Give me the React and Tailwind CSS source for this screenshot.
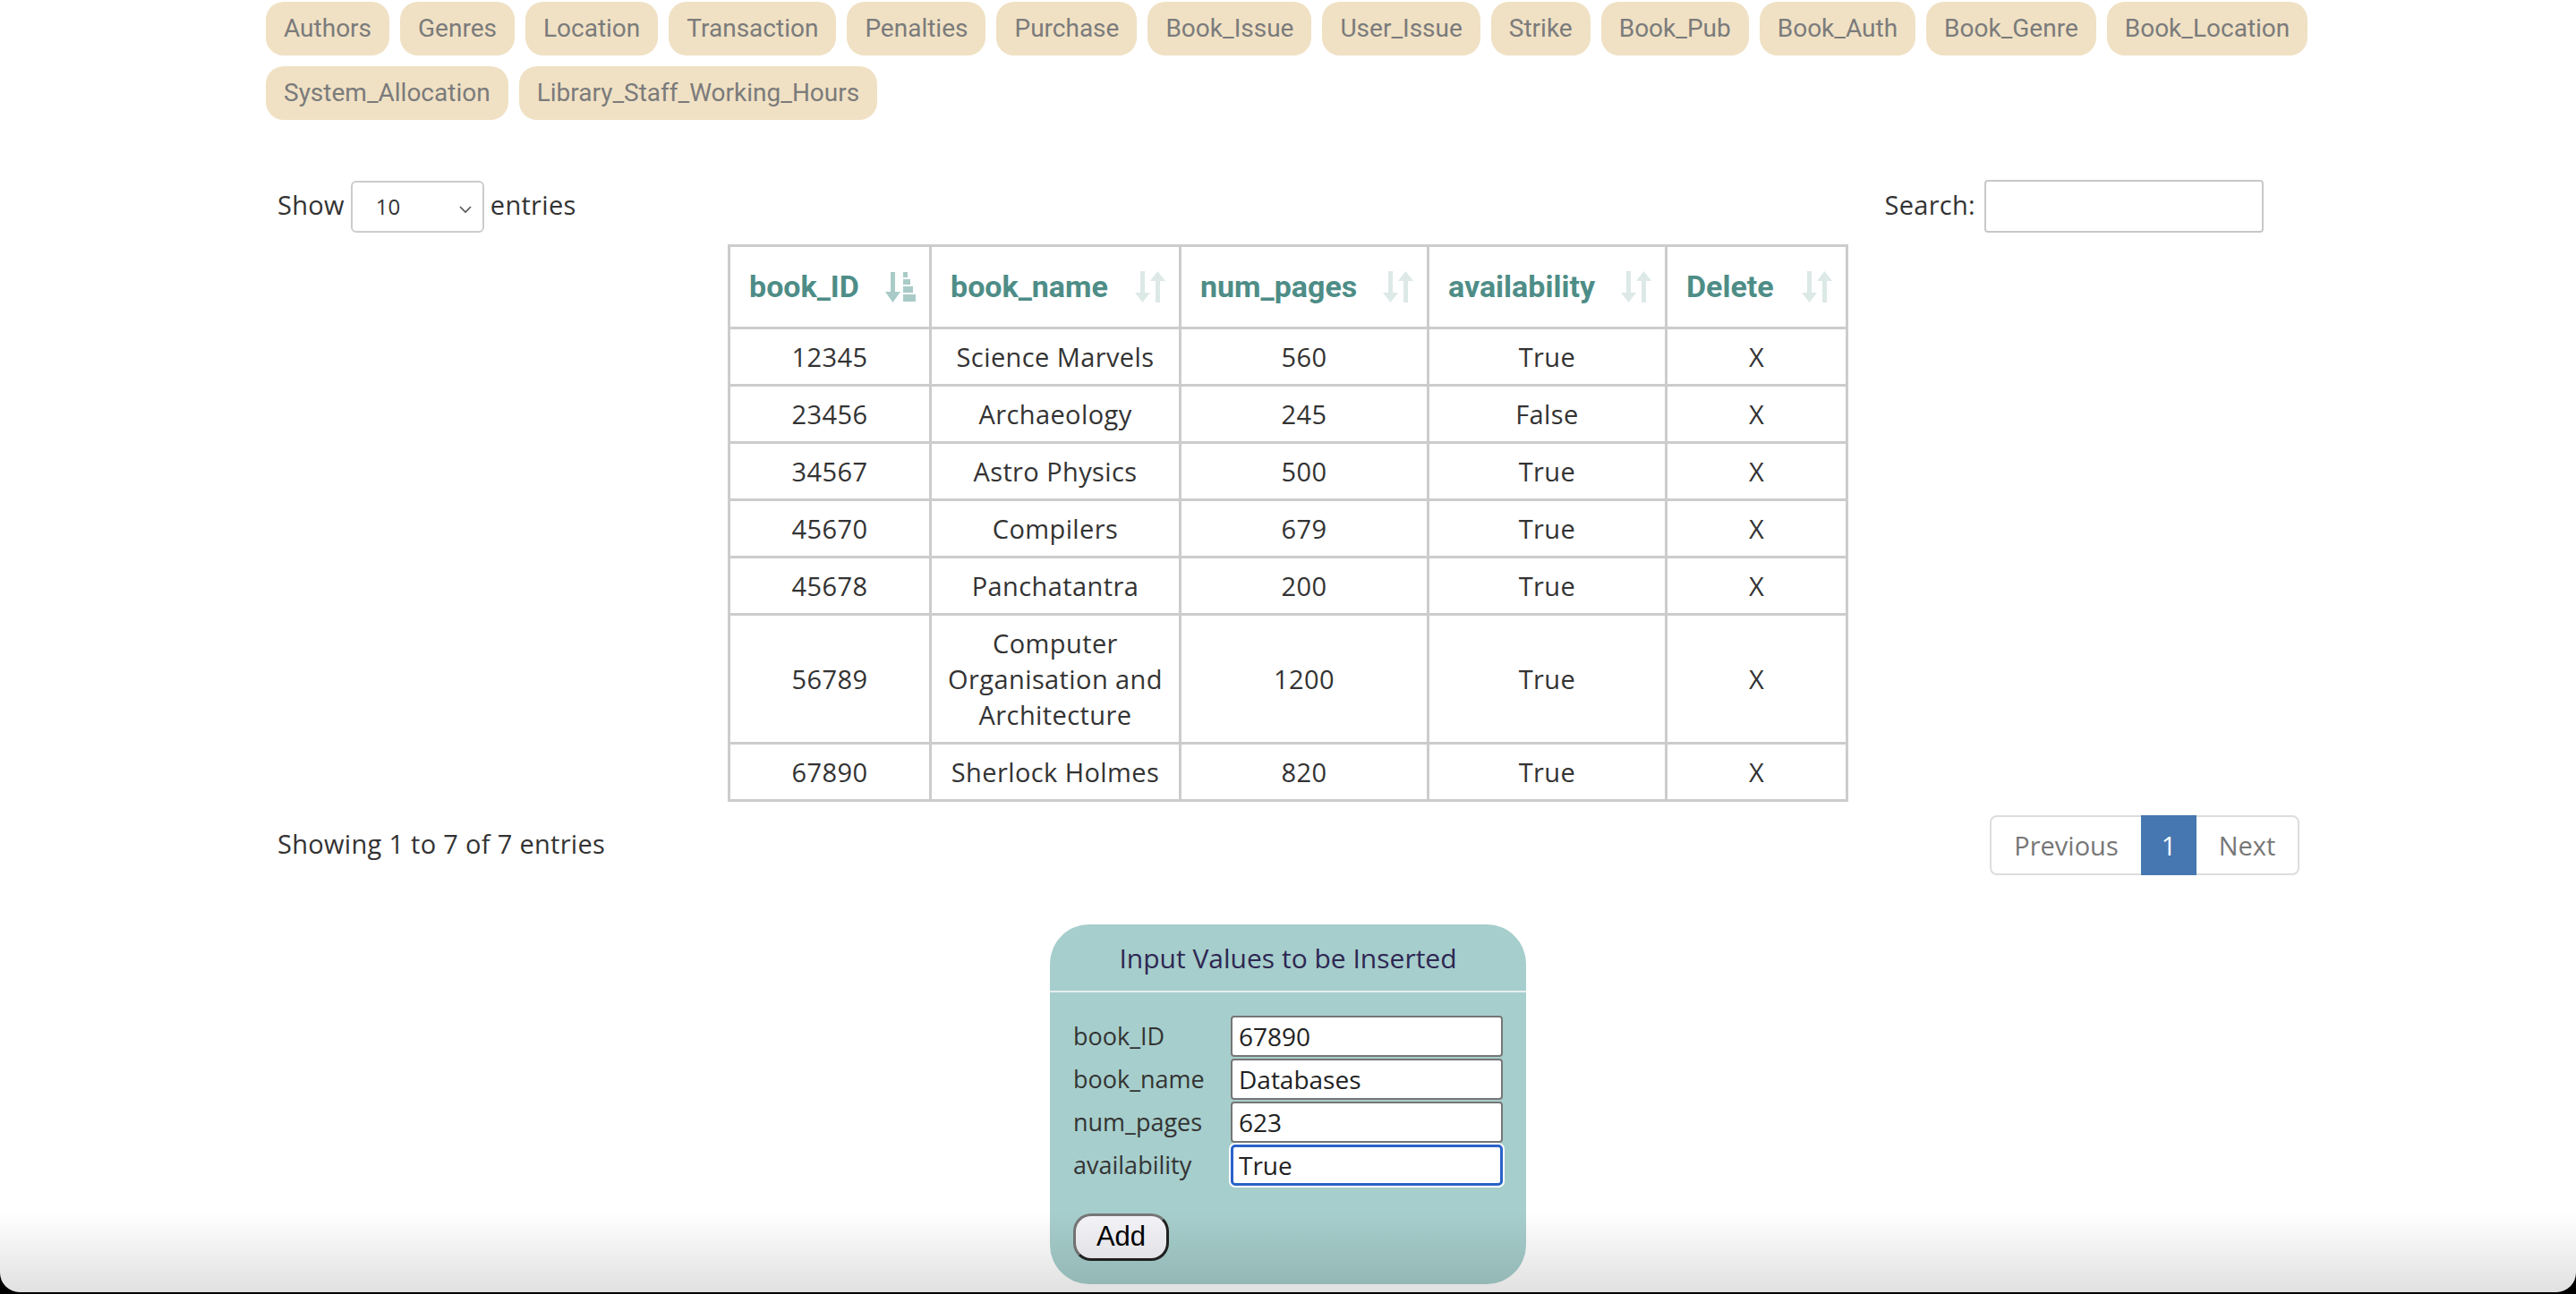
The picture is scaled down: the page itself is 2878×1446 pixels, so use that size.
import React from "react";

const row1 = ["Authors","Genres","Location","Transaction","Penalties","Purchase","Book_Issue","User_Issue","Strike","Book_Pub","Book_Auth","Book_Genre","Book_Location"];
const row2 = ["System_Allocation","Library_Staff_Working_Hours"];

const data = [
  ["12345", "Science Marvels", "560", "True"],
  ["23456", "Archaeology", "245", "False"],
  ["34567", "Astro Physics", "500", "True"],
  ["45670", "Compilers", "679", "True"],
  ["45678", "Panchatantra", "200", "True"],
  ["56789", "COA", "1200", "True"],
  ["67890", "Sherlock Holmes", "820", "True"],
];

function Pill({ label }) {
  return (
    <div className="h-[60px] px-[20px] rounded-[20px] bg-[#f0e1c4] text-[#7b7b7b] text-[28px] font-['Roboto',sans-serif] flex items-center">
      {label}
    </div>
  );
}

function SortBoth() {
  return (
    <svg width="34" height="35" viewBox="0 0 34 35" className="shrink-0">
      <rect x="6" y="0" width="5" height="26" fill="#dce9e7" />
      <polygon points="0,24 17,24 8.5,35" fill="#dce9e7" />
      <polygon points="17,11 34,11 25.5,0" fill="#dce9e7" />
      <rect x="23" y="9" width="5" height="26" fill="#dce9e7" />
    </svg>
  );
}

function SortAsc() {
  return (
    <svg width="34" height="34" viewBox="0 0 34 34" className="shrink-0">
      <rect x="6" y="0" width="5" height="24" fill="#a9cbc8" />
      <polygon points="0,22 17,22 8.5,34" fill="#a9cbc8" />
      <rect x="20" y="0" width="5" height="6" fill="#a9cbc8" />
      <rect x="20" y="8" width="8" height="6" fill="#a9cbc8" />
      <rect x="20" y="16" width="11" height="7" fill="#a9cbc8" />
      <rect x="20" y="25" width="14" height="8" fill="#a9cbc8" />
    </svg>
  );
}

const headers = ["book_ID", "book_name", "num_pages", "availability", "Delete"];

const tdCls = "border-[3px] border-[#cccccc] text-center text-[29px] tracking-[0.4px] leading-[40px] py-[10px]";

export default function App() {
  return (
    <div className="h-[1446px] w-[2878px] bg-black overflow-hidden">
      <div className="relative h-[1444px] bg-white rounded-b-[22px] overflow-hidden font-['Open_Sans',sans-serif] text-[#333333]">
        <div className="mx-auto w-[2284px] pt-[2px]">
          <div className="flex flex-col gap-[12px]">
            <div className="flex gap-[12px]">
              {row1.map((l) => <Pill key={l} label={l} />)}
            </div>
            <div className="flex gap-[12px]">
              {row2.map((l) => <Pill key={l} label={l} />)}
            </div>
          </div>

          <div className="mt-[67px] pl-[13px] pr-[52px] flex items-center justify-between text-[29px] tracking-[0.3px]">
            <div className="flex items-center gap-[7px]">
              <span className="-mt-[3px]">Show</span>
              <div className="relative w-[149px] h-[58px] border-2 border-[#cccccc] rounded-[6px] bg-white flex items-center pl-[26px] text-[24px] tracking-normal">
                10
                <svg width="14" height="10" viewBox="0 0 14 10" className="absolute right-[12px] top-[25px]">
                  <polyline points="1,2 7,8 13,2" fill="none" stroke="#555" strokeWidth="1.6" />
                </svg>
              </div>
              <span className="-mt-[3px]">entries</span>
            </div>
            <div className="flex items-center gap-[10px]">
              <span className="-mt-[3px]">Search:</span>
              <input className="w-[312px] h-[59px] border-2 border-[#c8c8c8] rounded-[4px] bg-white outline-none" readOnly />
            </div>
          </div>

          <table className="mx-auto mt-[13px] table-fixed border-collapse border-[3px] border-[#cccccc] w-[1249px]">
            <colgroup>
              <col className="w-[225px]" />
              <col className="w-[279px]" />
              <col className="w-[277px]" />
              <col className="w-[266px]" />
              <col className="w-[202px]" />
            </colgroup>
            <thead>
              <tr className="h-[92px]">
                {headers.map((h, i) => (
                  <th key={h} className="border-[3px] border-[#cccccc] pl-[21px] pr-[15px] text-left font-['Roboto',sans-serif] font-bold text-[34px] text-[#4e8d87]">
                    <div className="flex items-center justify-between">
                      <span>{h}</span>
                      {i === 0 ? <SortAsc /> : <SortBoth />}
                    </div>
                  </th>
                ))}
              </tr>
            </thead>
            <tbody>
              {data.map((r) => (
                <tr key={r[0]} className={r[1] === "COA" ? "h-[144px]" : "h-[64px]"}>
                  <td className={tdCls}>{r[0]}</td>
                  <td className={tdCls}>
                    {r[1] === "COA" ? (<>Computer<br />Organisation and<br />Architecture</>) : r[1]}
                  </td>
                  <td className={tdCls}>{r[2]}</td>
                  <td className={tdCls}>{r[3]}</td>
                  <td className={tdCls}>X</td>
                </tr>
              ))}
            </tbody>
          </table>

          <div className="mt-[15px] pl-[13px] pr-[12px] flex items-center justify-between text-[29px] tracking-[0.3px]">
            <span className="-mt-[3px]">Showing 1 to 7 of 7 entries</span>
            <div className="flex h-[67px] border-2 border-[#dddddd] rounded-[8px] text-[#777777] text-[29px] tracking-normal">
              <div className="w-[167px] flex items-center justify-center">Previous</div>
              <div className="w-[62px] -my-[2px] flex items-center justify-center bg-[#4677b0] text-white">1</div>
              <div className="w-[113px] flex items-center justify-center">Next</div>
            </div>
          </div>

          <div className="mx-auto mt-[55px] w-[532px] bg-[#a6cecc] rounded-[44px]">
            <div className="h-[74px] flex items-center justify-center text-[30px] text-[#2e2752]">
              Input Values to be Inserted
            </div>
            <div className="h-[2px] bg-[#e4efee]" />
            <div className="px-[26px] pt-[26px] pb-[26px]">
              <div className="flex flex-col gap-[2px]">
                {[["book_ID", "67890"], ["book_name", "Databases"], ["num_pages", "623"], ["availability", "True"]].map(([l, v], i) => (
                  <div key={l} className="flex items-center justify-between">
                    <span className="text-[27px] text-[#333333]">{l}</span>
                    <input
                      readOnly
                      defaultValue={v}
                      className={
                        i === 3
                          ? "w-[304px] h-[46px] px-[6px] rounded-[5px] border-[3px] border-[#2a62c9] ring-2 ring-white bg-white text-[28px] text-[#222222] outline-none"
                          : "w-[304px] h-[46px] px-[7px] rounded-[4px] border-2 border-[#767676] bg-white text-[28px] text-[#222222] outline-none"
                      }
                    />
                  </div>
                ))}
              </div>
              <button className="mt-[31px] w-[107px] h-[53px] rounded-[20px] border-[3px] border-t-[#767676] border-l-[#767676] border-r-[#222222] border-b-[#222222] bg-[#f3f3f8] font-['Liberation_Sans',sans-serif] text-[31px] text-black flex items-center justify-center">
                Add
              </button>
            </div>
          </div>
        </div>
        <div className="pointer-events-none absolute inset-x-0 bottom-0 h-[90px] bg-linear-to-b from-black/0 to-black/[0.12]" />
      </div>
    </div>
  );
}
